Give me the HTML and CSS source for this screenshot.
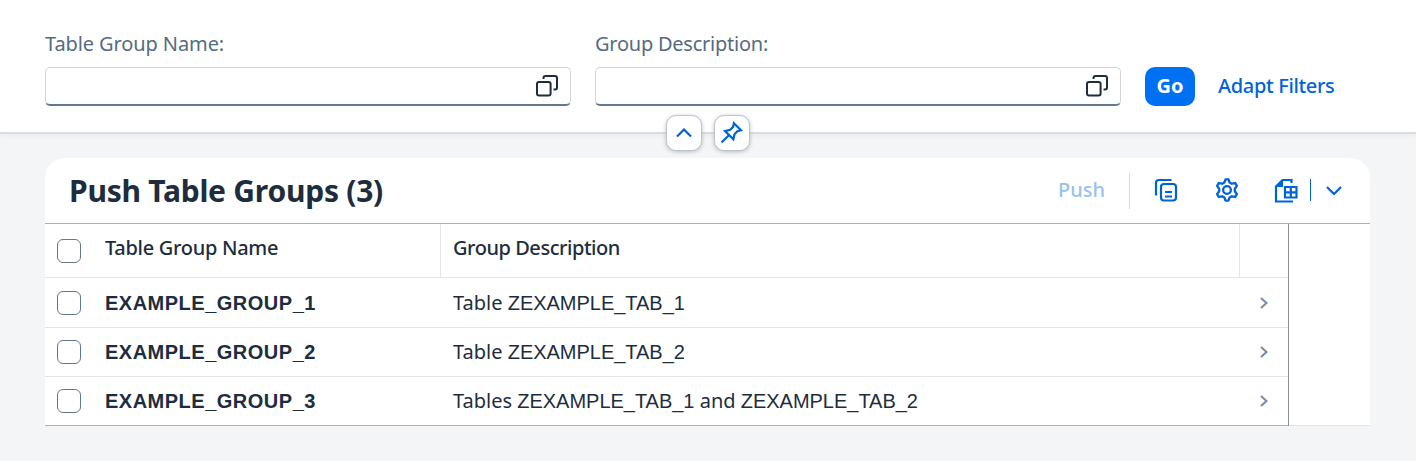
FILE: index.html
```html
<!DOCTYPE html>
<html lang="en">
<head>
<meta charset="utf-8">
<title>Push Table Groups</title>
<link rel="stylesheet" href="styles.css">
</head>
<body>
<header class="filter-bar">
  <div class="field">
    <label class="label label-name" for="name">Table Group Name:</label>
    <div class="input-box">
      <input id="name" class="input" type="text">
      <svg class="value-help" width="24" height="24" viewBox="0 0 24 24"><rect x="2" y="8" width="13.6" height="13.6" rx="2"/><path d="M8.500 5V4a2 2 0 0 1 2-2H20a2 2 0 0 1 2 2v9.500a2 2 0 0 1-2 2h-1.500"/></svg>
    </div>
  </div>
  <div class="field">
    <label class="label label-desc" for="desc">Group Description:</label>
    <div class="input-box">
      <input id="desc" class="input" type="text">
      <svg class="value-help" width="24" height="24" viewBox="0 0 24 24"><rect x="2" y="8" width="13.6" height="13.6" rx="2"/><path d="M8.500 5V4a2 2 0 0 1 2-2H20a2 2 0 0 1 2 2v9.500a2 2 0 0 1-2 2h-1.500"/></svg>
    </div>
  </div>
  <button class="go">Go</button>
  <a class="adapt">Adapt Filters</a>
  <div class="header-toggles">
    <button class="toggle"><svg class="icon" width="24" height="24" viewBox="0 0 24 24"><path d="m5 15.500 7-7 7 7"/></svg></button>
    <button class="toggle"><svg class="icon" width="24" height="24" viewBox="0.8 0 24 24"><path d="M14.700 2.200 21.800 9.200 18.200 10.300 15.300 13.200 14.200 18.300 5.800 10.100 11 8.800 13.900 5.900ZM9.700 14.300 2.300 21.500"/></svg></button>
  </div>
</header>
<main class="panel">
  <div class="toolbar">
    <h1 class="title">Push Table Groups (3)</h1>
    <span class="push">Push</span>
    <span class="separator"></span>
    <svg class="icon copy" width="24" height="24" viewBox="0 0 24 24"><path d="M2 17.500V5a3 3 0 0 1 3-3h12.500"/><rect x="7" y="6" width="15" height="16.500" rx="3"/><path d="M11 14h7M11 18.500h7"/></svg>
    <svg class="icon gear" width="24" height="24" viewBox="0.5 0.5 23 23"><path d="M10.600 1.800h2.800l1.100 3 2.100 1.200 3.300-.7 1.600 2.700-2 2.800v2.400l2 2.800-1.600 2.700-3.300-.7-2.100 1.200-1.100 3h-2.800l-1.100-3L7.400 18l-3.300.7L2.500 16l2-2.800v-2.400l-2-2.800 1.600-2.700 3.300.7 2.100-1.200Z"/><circle cx="12" cy="12" r="3.700"/></svg>
    <svg class="icon export" width="24" height="25" viewBox="0 0 24 25"><path d="M17.500 5V2H8.500L2 8.500v15h17"/><path class="solid" d="m2 9 7-7v7Z"/><path d="M11 9h11.500v10.500H11ZM16.800 9v10.500M11 14.300h11.500"/></svg>
    <span class="split-line"></span>
    <svg class="icon down" width="24" height="24" viewBox="0 0 24 24"><path d="m5 9 7 7 7-7"/></svg>
  </div>
  <div class="table">
    <div class="row head">
      <div class="cell check"><span class="checkbox"></span></div>
      <div class="cell name">Table Group Name</div>
      <div class="cell desc">Group Description</div>
      <div class="cell nav"></div>
    </div>
    <div class="row first">
      <div class="cell check"><span class="checkbox"></span></div>
      <div class="cell name"><span><span class="code">EXAMPLE_GROUP_1</span></span></div>
      <div class="cell desc"><span>Table <span class="code">ZEXAMPLE_TAB_1</span></span></div>
      <div class="cell nav"><svg class="chevron" width="12" height="12" viewBox="0 0 12 12"><path d="m3 1 5.500 5L3 11"/></svg></div>
    </div>
    <div class="row">
      <div class="cell check"><span class="checkbox"></span></div>
      <div class="cell name"><span><span class="code">EXAMPLE_GROUP_2</span></span></div>
      <div class="cell desc"><span>Table <span class="code">ZEXAMPLE_TAB_2</span></span></div>
      <div class="cell nav"><svg class="chevron" width="12" height="12" viewBox="0 0 12 12"><path d="m3 1 5.500 5L3 11"/></svg></div>
    </div>
    <div class="row last">
      <div class="cell check"><span class="checkbox"></span></div>
      <div class="cell name"><span><span class="code">EXAMPLE_GROUP_3</span></span></div>
      <div class="cell desc"><span>Tables <span class="code">ZEXAMPLE_TAB_1</span> and <span class="code">ZEXAMPLE_TAB_2</span></span></div>
      <div class="cell nav"><svg class="chevron" width="12" height="12" viewBox="0 0 12 12"><path d="m3 1 5.500 5L3 11"/></svg></div>
    </div>
  </div>
</main>
</body>
</html>
```
FILE: styles.css
```css
* { box-sizing: border-box; }
html { background: #fff; }
body {
  margin: 0;
  height: 461px;
  overflow: hidden;
  background: #f4f5f7;
  color: #1d2d3e;
  font-family: "Noto Sans", sans-serif;
  font-size: 20px;
  line-height: 28px;
  white-space: nowrap;
}
button { font: inherit; padding: 0; }
.filter-bar {
  position: relative;
  display: flex;
  align-items: flex-end;
  height: 134px;
  padding: 0 45px 26px;
  background: #fff;
  border-bottom: 2px solid #d9dbdc;
  box-shadow: 0 2px 4px #e9ebed;
}
.field { width: 526px; margin-right: 24px; }
.label { display: block; margin-bottom: 9px; color: #556b82; }
.label-name { letter-spacing: -0.1px; }
.label-desc { letter-spacing: -0.24px; }
.input-box {
  display: flex;
  align-items: center;
  height: 39px;
  padding-right: 11px;
  background: #fff;
  border: 1px solid #d0d5dc;
  border-bottom: 2px solid #62788f;
  border-radius: 5px;
}
.input { flex: 1; min-width: 0; border: 0; outline: 0; background: none; }
.value-help { fill: none; stroke: #1d2d3e; stroke-width: 2; }
.go {
  width: 50px;
  height: 39px;
  padding-bottom: 2px;
  border: 0;
  border-radius: 10px;
  background: #0070f2;
  color: #fff;
  font-weight: 700;
}
.adapt { margin: 0 0 6px 23px; color: #0064d9; font-weight: 500; letter-spacing: -0.34px; }
.header-toggles {
  position: absolute;
  left: 666px;
  top: 115px;
  display: flex;
  gap: 12px;
}
.toggle {
  display: flex;
  align-items: center;
  justify-content: center;
  width: 36px;
  height: 36px;
  border: 1px solid #bcc3ca;
  border-radius: 10px;
  background: #fff;
  box-shadow: 0 1px 4px #b9c0c8;
}
.icon { fill: none; stroke: #0064d9; stroke-width: 2.200; flex: none; }
.icon .solid { fill: #0064d9; stroke: none; }
.panel {
  width: 1325px;
  height: 268px;
  margin: 24px 0 0 45px;
  background: #fff;
  border-radius: 20px 20px 0 0;
  border-bottom: 1px solid #e5e5e5;
}
.toolbar {
  display: flex;
  align-items: center;
  height: 66px;
  padding: 0 24px 1px;
  border-bottom: 1px solid #a8b3bd;
}
.title { margin: 2px auto 0 0; font-size: 30px; line-height: 36px; font-weight: 700; letter-spacing: -0.24px; }
.push { color: #99c1f0; font-weight: 500; }
.separator { width: 1px; height: 36px; margin: 1px 24px 0; background: #d9d9d9; }
.copy { margin-right: 37px; }
.gear { margin-right: 35px; stroke-linejoin: round; }
.split-line { width: 1px; height: 22px; margin: 0 11px 0 12px; background: #0064d9; }
.table { width: 1244px; height: 202px; border-right: 1px solid #8c8f92; }
.row { display: flex; height: 49px; border-bottom: 1px solid #e5e5e5; }
.head { height: 54px; }
.first { height: 50px; }
.last { border-bottom-color: #a8b3bd; }
.cell { display: flex; align-items: center; }
.check { width: 48px; padding-left: 12px; }
.name { width: 348px; padding-left: 12px; font-weight: 600; }
.desc { width: 799px; padding-left: 12px; }
.code { font-family: "Liberation Sans", Arial, sans-serif; line-height: 1; letter-spacing: -0.02px; }
.name .code { letter-spacing: 0.5px; }
.head .name, .head .desc {
  padding-bottom: 6px;
  border-right: 1px solid #e5e5e5;
  font-weight: 500;
  letter-spacing: -0.3px;
}
.head .desc { letter-spacing: -0.46px; }
.nav { padding-left: 18px; }
.checkbox { width: 24px; height: 24px; border: 1px solid #62788f; border-radius: 6px; }
.chevron { fill: none; stroke: #758ca4; stroke-width: 2; }
```
